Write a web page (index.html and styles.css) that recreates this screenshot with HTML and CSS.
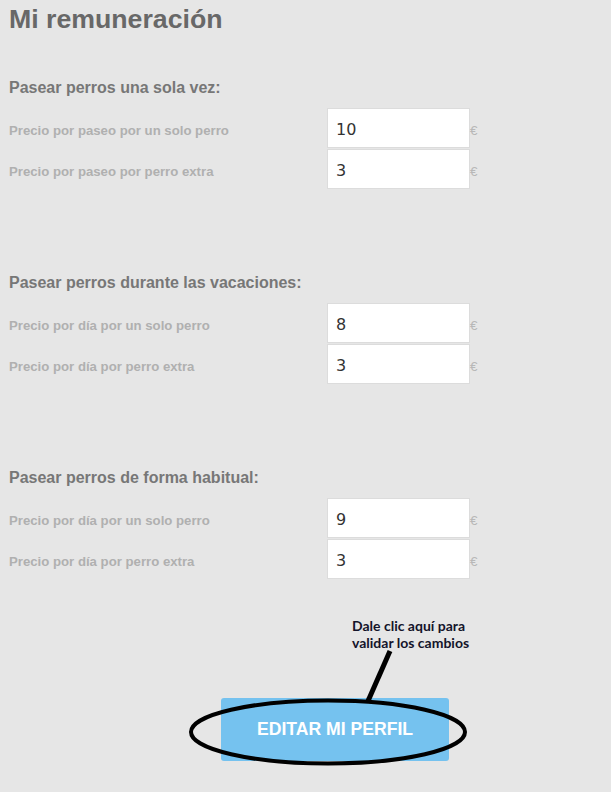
FILE: index.html
```html
<!DOCTYPE html>
<html lang="es">
<head>
<meta charset="utf-8">
<title>Mi remuneración</title>
<link rel="stylesheet" href="styles.css">
</head>
<body>
<main class="page">
  <h1 class="title">Mi remuneración</h1>

  <section class="section">
    <h2 class="section-title">Pasear perros una sola vez:</h2>
    <div class="rows">
      <div class="row"><label class="label">Precio por paseo por un solo perro</label><input class="field" type="text" value="10"><span class="euro">€</span></div>
      <div class="row"><label class="label">Precio por paseo por perro extra</label><input class="field" type="text" value="3"><span class="euro">€</span></div>
    </div>
  </section>

  <section class="section">
    <h2 class="section-title">Pasear perros durante las vacaciones:</h2>
    <div class="rows">
      <div class="row"><label class="label">Precio por día por un solo perro</label><input class="field" type="text" value="8"><span class="euro">€</span></div>
      <div class="row"><label class="label">Precio por día por perro extra</label><input class="field" type="text" value="3"><span class="euro">€</span></div>
    </div>
  </section>

  <section class="section">
    <h2 class="section-title">Pasear perros de forma habitual:</h2>
    <div class="rows">
      <div class="row"><label class="label">Precio por día por un solo perro</label><input class="field" type="text" value="9"><span class="euro">€</span></div>
      <div class="row"><label class="label">Precio por día por perro extra</label><input class="field" type="text" value="3"><span class="euro">€</span></div>
    </div>
  </section>

  <div class="actions">
    <button class="btn" type="button">EDITAR MI PERFIL</button>
  </div>
</main>

<svg class="annotation" width="611" height="792" viewBox="0 0 611 792" aria-hidden="true">
  <line x1="390" y1="651" x2="368" y2="701" stroke="#000" stroke-width="5"/>
  <ellipse cx="328" cy="732" rx="137" ry="31.5" fill="none" stroke="#000" stroke-width="4"/>
</svg>
<p class="note">Dale clic aquí para<br>validar los cambios</p>
</body>
</html>
```

FILE: styles.css
```css
html, body {
  margin: 0;
  padding: 0;
  background: #e6e6e6;
}

body {
  font-family: "Liberation Sans", Arial, sans-serif;
}

.page {
  padding: 3px 9px 0;
}

.title {
  margin: 0;
  font-size: 26.7px;
  line-height: 32px;
  font-weight: bold;
  color: #686868;
}

.section {
  margin-top: 43px;
}

.section + .section {
  margin-top: 84px;
}

.section-title {
  margin: 0 0 11px;
  font-size: 16px;
  line-height: 19px;
  font-weight: bold;
  color: #777;
}

.rows {
  display: flex;
  flex-direction: column;
  gap: 1px;
}

.row {
  display: flex;
  align-items: center;
}

.label {
  width: 318px;
  flex: none;
  padding-top: 5px;
  font-size: 13.2px;
  line-height: 15px;
  font-weight: bold;
  color: #b0b0b0;
}

.field {
  box-sizing: border-box;
  width: 143px;
  height: 40px;
  margin: 0;
  padding: 2px 8px 0;
  border: 1px solid #dcdcdc;
  border-radius: 0;
  background: #fff;
  font-family: "DejaVu Sans", Verdana, sans-serif;
  font-size: 16px;
  color: #333;
  outline: none;
}

.euro {
  padding-top: 4px;
  font-size: 13.5px;
  color: #b8b8b8;
}

.actions {
  margin-top: 119px;
  padding-left: 212px;
}

.btn {
  width: 228px;
  height: 63px;
  border: 0;
  border-radius: 3px;
  background: #75c2ef;
  color: #fff;
  font-family: "Liberation Sans", Arial, sans-serif;
  font-size: 17.6px;
  font-weight: bold;
  padding: 0;
}

.annotation {
  position: absolute;
  left: 0;
  top: 0;
  pointer-events: none;
}

.note {
  position: absolute;
  left: 352px;
  top: 617px;
  margin: 0;
  font-family: Lato, "Open Sans", sans-serif;
  font-size: 14px;
  line-height: 17px;
  font-weight: bold;
  color: #14142a;
}
```
